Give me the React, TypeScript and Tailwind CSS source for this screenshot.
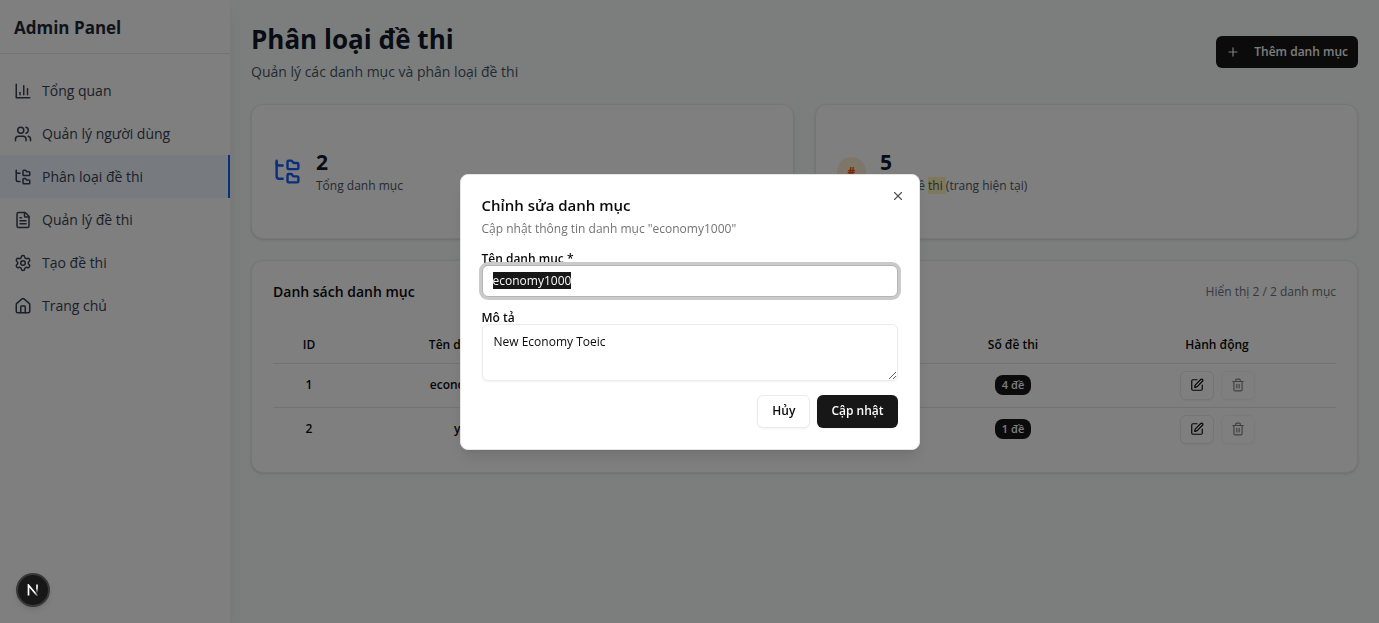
import { useEffect, useRef } from "react";
import {
  FileText,
  FolderTree,
  House,
  Plus,
  Settings,
  SquarePen,
  Trash2,
  Users,
  X,
} from "lucide-react";

function BarChartIcon({ className }: { className?: string }) {
  return (
    <svg
      viewBox="0 0 24 24"
      className={className}
      fill="none"
      stroke="currentColor"
      strokeWidth="2"
      strokeLinecap="round"
      strokeLinejoin="round"
      aria-hidden="true"
    >
      <path d="M3 3v18h18" />
      <path d="M18 17V9" />
      <path d="M13 17V5" />
      <path d="M8 17v-3" />
    </svg>
  );
}

const navItems = [
  { label: "Tổng quan", icon: BarChartIcon, active: false },
  { label: "Quản lý người dùng", icon: Users, active: false },
  { label: "Phân loại đề thi", icon: FolderTree, active: true },
  { label: "Quản lý đề thi", icon: FileText, active: false },
  { label: "Tạo đề thi", icon: Settings, active: false },
  { label: "Trang chủ", icon: House, active: false },
];

const categories = [
  { id: 1, name: "economy1000", description: "New Economy Toeic", count: 4 },
  { id: 2, name: "ybm1", description: "YBM Toeic", count: 1 },
];

function Sidebar() {
  return (
    <aside className="z-10 w-[230px] shrink-0 bg-white shadow-lg">
      <div className="flex h-[54px] items-center border-b border-gray-200 px-3.5 pt-0.5">
        <h2 className="text-[17px] font-bold text-gray-800">Admin Panel</h2>
      </div>
      <nav className="pt-[15px]">
        {navItems.map(({ label, icon: Icon, active }) => (
          <a
            key={label}
            href="#"
            className={
              active
                ? "flex h-[43px] items-center gap-2.5 border-r-2 border-blue-600 bg-blue-50 px-3.5 text-sm text-gray-700"
                : "flex h-[43px] items-center gap-2.5 px-3.5 text-sm text-gray-700"
            }
          >
            <Icon className="size-[18px]" />
            {label}
          </a>
        ))}
      </nav>
    </aside>
  );
}

function Stats() {
  return (
    <div className="grid grid-cols-2 gap-[21px]">
      <section className="flex h-[135px] items-center gap-3.5 rounded-xl border border-[#ebebeb] bg-white px-[21px] shadow-sm">
        <FolderTree className="size-[29px] text-blue-600" />
        <div>
          <p className="text-[21px] leading-[29px] font-bold text-gray-900">2</p>
          <p className="text-xs leading-[18px] text-gray-600">Tổng danh mục</p>
        </div>
      </section>
      <section className="flex h-[135px] items-center gap-3.5 rounded-xl border border-[#ebebeb] bg-white px-[21px] shadow-sm">
        <span className="flex size-[29px] items-center justify-center rounded-full bg-orange-100 text-xs font-bold text-orange-600">
          #
        </span>
        <div>
          <p className="text-[21px] leading-[29px] font-bold text-gray-900">5</p>
          <p className="text-xs leading-[18px] text-gray-600">
            Tổng đề <span className="bg-[#fff0b4]">thi </span>(trang hiện tại)
          </p>
        </div>
      </section>
    </div>
  );
}

function CategoryTable() {
  return (
    <section className="rounded-xl border border-[#ebebeb] bg-white px-[21px] pt-[21px] pb-[21px] shadow-sm">
      <div className="flex h-5 items-center justify-between">
        <h2 className="text-sm font-semibold text-neutral-950">Danh sách danh mục</h2>
        <p className="text-xs text-gray-500">Hiển thị 2 / 2 danh mục</p>
      </div>
      <table className="mt-[26px] w-full table-fixed text-center text-xs text-neutral-950">
        <colgroup>
          <col className="w-[72px]" />
          <col className="w-[250px]" />
          <col />
          <col className="w-[170px]" />
          <col className="w-[238px]" />
        </colgroup>
        <thead>
          <tr className="h-[35px] border-b border-neutral-200">
            <th className="font-semibold">ID</th>
            <th className="font-semibold">Tên danh mục</th>
            <th className="font-semibold">Mô tả</th>
            <th className="font-semibold">Số đề thi</th>
            <th className="font-semibold">Hành động</th>
          </tr>
        </thead>
        <tbody>
          {categories.map((c) => (
            <tr key={c.id} className="h-11 border-b border-neutral-200 last:border-b-0">
              <td className="font-semibold">{c.id}</td>
              <td className="font-semibold">{c.name}</td>
              <td>{c.description}</td>
              <td>
                <span className="inline-flex h-5 items-center rounded-lg bg-neutral-900 px-[7px] text-[11px] font-semibold text-neutral-50">
                  {c.count} đề
                </span>
              </td>
              <td>
                <div className="flex justify-center gap-[7px]">
                  <button
                    type="button"
                    aria-label={`Sửa ${c.name}`}
                    className="flex h-[29px] w-[34px] items-center justify-center rounded-md border border-[#ebebeb] bg-white shadow-xs"
                  >
                    <SquarePen className="size-3.5" />
                  </button>
                  <button
                    type="button"
                    disabled
                    aria-label={`Xóa ${c.name}`}
                    className="flex h-[29px] w-[34px] items-center justify-center rounded-md border border-[#ebebeb] bg-white opacity-50 shadow-xs"
                  >
                    <Trash2 className="size-3.5" />
                  </button>
                </div>
              </td>
            </tr>
          ))}
        </tbody>
      </table>
    </section>
  );
}

function EditDialog() {
  const nameRef = useRef<HTMLInputElement>(null);

  useEffect(() => {
    nameRef.current?.focus();
    nameRef.current?.select();
  }, []);

  return (
    <div className="fixed inset-0 z-30 flex items-center justify-center bg-black/50">
      <div
        role="dialog"
        aria-modal="true"
        aria-labelledby="dialog-title"
        className="relative flex w-[460px] flex-col gap-3.5 rounded-lg border border-neutral-200 bg-white p-[21px] text-neutral-950 shadow-lg"
      >
        <div className="flex flex-col gap-1.5">
          <h2 id="dialog-title" className="text-[15px] leading-[18px] font-semibold">
            Chỉnh sửa danh mục
          </h2>
          <p className="text-xs leading-[18px] text-neutral-500">
            Cập nhật thông tin danh mục "economy1000"
          </p>
        </div>
        <div className="flex flex-col">
          <label htmlFor="name" className="text-xs leading-[13px] font-semibold">
            Tên danh mục *
          </label>
          <input
            id="name"
            ref={nameRef}
            defaultValue="economy1000"
            className="h-8 rounded-md border border-[#b5b5b5] bg-white px-2.5 text-xs ring-3 ring-[#cacaca] outline-none selection:bg-neutral-900 selection:text-neutral-50"
          />
        </div>
        <div className="flex flex-col">
          <label htmlFor="description" className="text-xs leading-[13px] font-semibold">
            Mô tả
          </label>
          <textarea
            id="description"
            defaultValue="New Economy Toeic"
            className="h-[57px] resize-y rounded-md border border-[#ebebeb] bg-white px-[11px] py-2 text-xs leading-[18px] shadow-xs outline-none"
          />
        </div>
        <div className="flex justify-end gap-[7px]">
          <button
            type="button"
            className="h-[33px] rounded-md border border-[#ebebeb] bg-white px-3.5 text-xs font-semibold shadow-xs"
          >
            Hủy
          </button>
          <button
            type="button"
            className="h-[33px] rounded-md bg-neutral-900 px-3.5 text-xs font-semibold text-neutral-50 shadow-xs"
          >
            Cập nhật
          </button>
        </div>
        <button type="button" aria-label="Đóng" className="absolute top-3.5 right-3.5 opacity-70">
          <X className="size-3.5" />
        </button>
      </div>
    </div>
  );
}

function DevBadge() {
  return (
    <button
      type="button"
      aria-label="Next.js"
      className="fixed bottom-4 left-4 z-40 flex size-[34px] items-center justify-center rounded-full border-2 border-[#383838] bg-[#171717] shadow-md"
    >
      <svg viewBox="0 0 12 12" className="size-3" fill="none" strokeWidth="1.7">
        <defs>
          <linearGradient id="fade-right" x1="0" y1="0" x2="0" y2="1">
            <stop offset="0.4" stopColor="#fff" />
            <stop offset="1" stopColor="#fff" stopOpacity="0" />
          </linearGradient>
          <linearGradient id="fade-diagonal" x1="0" y1="0" x2="1" y2="1">
            <stop offset="0.65" stopColor="#fff" />
            <stop offset="1" stopColor="#fff" stopOpacity="0.2" />
          </linearGradient>
        </defs>
        <path d="M1.5 11.5V1.2L10.6 12" stroke="url(#fade-diagonal)" />
        <path d="M9.2 0.5h1.6v8.5H9.2z" fill="url(#fade-right)" />
      </svg>
    </button>
  );
}

export default function App() {
  return (
    <div className="flex min-h-screen bg-[#f8fcfa] font-['Open_Sans','Noto_Sans',sans-serif]">
      <Sidebar />
      <main className="flex min-w-0 flex-1 flex-col gap-[21px] px-[21px] pt-[21px]">
        <header className="flex h-[62px] items-center justify-between">
          <div>
            <h1 className="text-[26px] leading-9 font-bold text-gray-900">Phân loại đề thi</h1>
            <p className="mt-1 text-sm leading-[22px] text-gray-600">
              Quản lý các danh mục và phân loại đề thi
            </p>
          </div>
          <button
            type="button"
            className="flex h-8 items-center gap-3.5 rounded-md bg-neutral-900 px-2.5 text-xs font-semibold text-neutral-50"
          >
            <Plus className="size-3.5" />
            Thêm danh mục
          </button>
        </header>
        <Stats />
        <CategoryTable />
      </main>
      <EditDialog />
      <DevBadge />
    </div>
  );
}
